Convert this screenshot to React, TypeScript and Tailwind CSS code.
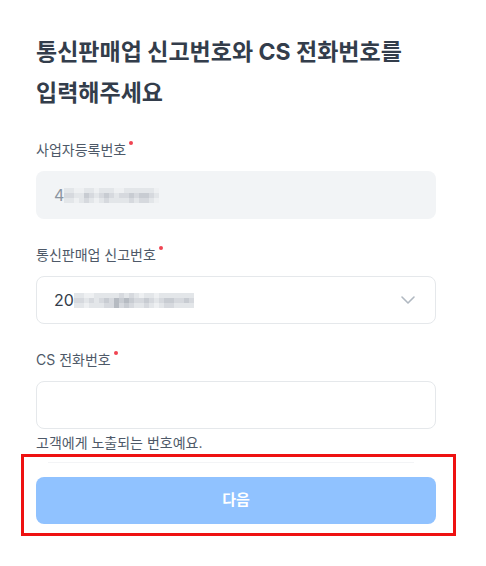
import { ChevronDown } from "lucide-react";

const FONT = { fontFamily: '"Inter", "Noto Sans CJK KR", sans-serif' };

// masked digits are drawn as a strip of gray mosaic cells
const SHADES = [
  "bg-[#eef0f2]",
  "bg-[#e3e6e9]",
  "bg-[#d6d9de]",
  "bg-[#c8ccd2]",
  "bg-[#b6bbc2]",
  "bg-[#9fa6ae]",
];

const MASK_A = [
  [1, 1, 0, 0, 1, 1, 0, 1, 1, 1, 0, 0, 1, 1, 1, 1, 1, 1, 0],
  [2, 2, 1, 1, 3, 2, 1, 2, 3, 2, 1, 2, 2, 3, 2, 3, 3, 2, 1],
  [1, 1, 0, 1, 2, 1, 0, 1, 2, 1, 1, 1, 1, 2, 1, 2, 2, 1, 0],
];

const MASK_B = [
  [1, 1, 0, 0, 1, 1, 1, 1, 1, 2, 1, 2, 1, 0, 1, 1, 0, 1, 1, 1, 1, 1, 1, 1],
  [2, 2, 1, 2, 1, 2, 3, 2, 4, 3, 4, 3, 2, 2, 3, 2, 1, 2, 3, 3, 2, 2, 3, 2],
  [1, 1, 0, 1, 1, 1, 2, 2, 4, 2, 3, 2, 1, 1, 2, 1, 0, 1, 2, 2, 1, 1, 1, 1],
];

const Mask = ({ rows }: { rows: number[][] }) => (
  <div className="flex flex-col">
    {rows.map((row, i) => (
      <div key={i} className="flex">
        {row.map((s, j) => (
          <span key={j} className={`block h-[5px] w-[5px] ${SHADES[s]}`} />
        ))}
      </div>
    ))}
  </div>
);

const Label = ({ children }: { children: string }) => (
  <div className="flex h-5 items-start text-[14px] leading-5 text-[#4e5968]">
    <span>{children}</span>
    <span className="ml-[3px] mt-px block h-[4px] w-[4px] rounded-full bg-[#f04452]" />
  </div>
);

export default function App() {
  return (
    <div className="min-h-[566px] w-[486px] bg-white" style={FONT}>
      <div className="ml-9 w-[400px] pt-8">
        <h1 className="whitespace-nowrap text-[23px] font-bold leading-[41px] text-[#333d4b]">
          통신판매업 신고번호와 CS 전화번호를
          <br />
          입력해주세요
        </h1>

        <div className="mt-[26px]">
          <Label>사업자등록번호</Label>
          <div className="mt-[11px] flex h-12 items-center rounded-lg bg-[#f2f4f6] pl-[18px]">
            <span className="text-[16px] text-[#8b95a1]">4</span>
            <Mask rows={MASK_A} />
          </div>
        </div>

        <div className="mt-[26px]">
          <Label>통신판매업 신고번호</Label>
          <div className="mt-[11px] flex h-12 items-center rounded-lg border border-[#e5e8eb] pl-[17px] pr-[15px]">
            <span className="text-[16px] text-[#333d4b]">20</span>
            <Mask rows={MASK_B} />
            <ChevronDown className="ml-auto h-6 w-6 text-[#b0b8c1]" strokeWidth={1.6} />
          </div>
        </div>

        <div className="mt-[26px]">
          <Label>CS 전화번호</Label>
          <div className="mt-[11px] h-12 rounded-lg border border-[#e5e8eb]" />
          <p className="mt-[5px] text-[14px] leading-[18px] text-[#4e5968]">
            고객에게 노출되는 번호예요.
          </p>
        </div>
      </div>

      <div className="ml-[21px] mt-[2px] h-[82px] w-[435px] border-[3px] border-[#ee1111] pl-3">
        <div className="ml-3 mt-[5px] h-px w-[366px] bg-[#f3f4f6]" />
        <button className="mt-[14px] flex h-[47px] w-[400px] items-center justify-center rounded-lg bg-[#90c2ff] text-[15px] font-bold text-white">
          다음
        </button>
      </div>
    </div>
  );
}
